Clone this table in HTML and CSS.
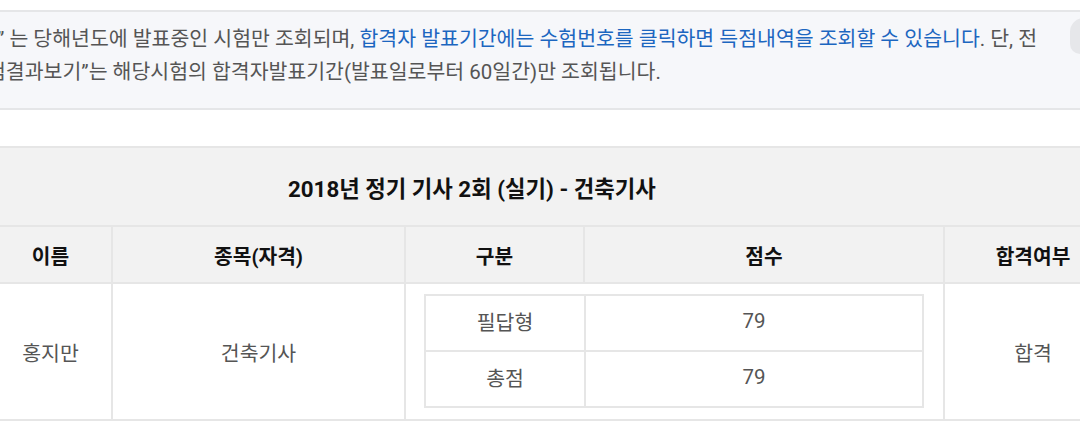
FILE: index.html
```html
<!DOCTYPE html>
<html lang="ko">
<head>
<meta charset="utf-8">
<link rel="stylesheet" href="styles.css">
</head>
<body>
<div class="notice">
  <div class="line l1">” 는 당해년도에 발표중인 시험만 조회되며, <span class="hl">합격자 발표기간에는 수험번호를 클릭하면 득점내역을 조회할 수 있습니다</span>. 단, 전</div>
  <div class="line l2">험결과보기”는 해당시험의 합격자발표기간(발표일로부터 60일간)만 조회됩니다.</div>
  <div class="edge"></div>
</div>
<table class="result">
  <colgroup>
    <col class="c1"><col class="c2"><col class="c3"><col class="c4"><col class="c5">
  </colgroup>
  <tr class="title-row"><th colspan="5" class="title">2018년 정기 기사 2회 (실기) - 건축기사</th></tr>
  <tr class="head-row"><th>이름</th><th>종목(자격)</th><th>구분</th><th>점수</th><th>합격여부</th></tr>
  <tr class="body-row">
    <td>홍지만</td>
    <td>건축기사</td>
    <td colspan="2" class="scores">
      <table class="inner">
        <tr><td class="ic1">필답형</td><td>79</td></tr>
        <tr><td class="ic1">총점</td><td>79</td></tr>
      </table>
    </td>
    <td>합격</td>
  </tr>
</table>
</body>
</html>
```
FILE: styles.css
```css
html, body {
  margin: 0;
  padding: 0;
  background: #fff;
  overflow: hidden;
  width: 1080px;
  height: 436px;
  font-family: Roboto, "Noto Sans CJK KR", sans-serif;
}
.notice {
  position: relative;
  margin: 10px 0 0 -20px;
  width: 1200px;
  height: 96px;
  box-sizing: content-box;
  background: #f6f7fa;
  border-top: 2px solid #e5e6e8;
  border-bottom: 2px solid #e5e6e8;
  padding: 0;
  color: #555;
  font-size: 20.5px;
}
.line {
  white-space: nowrap;
  line-height: 33px;
}
.l1 { padding: 11px 0 0 17px; }
.l2 { padding-left: 7px; }
.hl { color: #1c66c0; }
.edge {
  position: absolute;
  left: 1090px;
  top: 6px;
  width: 24px;
  height: 36px;
  background: #e6e7ea;
  border-radius: 14px 0 0 10px;
}
.result {
  margin: 36px 0 0 -12px;
  border-collapse: collapse;
  width: 1133px;
  table-layout: fixed;
}
.c1 { width: 123px; }
.c2 { width: 293px; }
.c3 { width: 179px; }
.c4 { width: 360px; }
.c5 { width: 178px; }
.result th, .result > tbody > tr > td {
  border: 2px solid #e6e6e6;
  text-align: center;
  padding: 0;
}
.title-row { height: 79px; }
.title-row th {
  background: #f2f2f2;
  text-align: left;
  padding-left: 299px;
  font-size: 22.3px;
  font-weight: 700;
  color: #111;
  border-left: none;
  border-right: none;
}
.head-row { height: 57px; }
.head-row th {
  background: #f2f2f2;
  font-size: 20.3px;
  font-weight: 700;
  color: #111;
}
.body-row { height: 137px; }
.body-row > td {
  color: #555;
  font-size: 20.5px;
  background: #fff;
}
.result > tbody > tr > td.scores {
  padding: 9px 19px 11px 18px;
}
.inner {
  width: 100%;
  border-collapse: collapse;
  table-layout: fixed;
}
.inner tr { height: 56px; }
.inner td {
  border: 2px solid #e6e6e6;
  text-align: center;
  color: #555;
  font-size: 20.5px;
  padding: 0 0 4px;
}
.inner .ic1 { width: 158px; }
```
